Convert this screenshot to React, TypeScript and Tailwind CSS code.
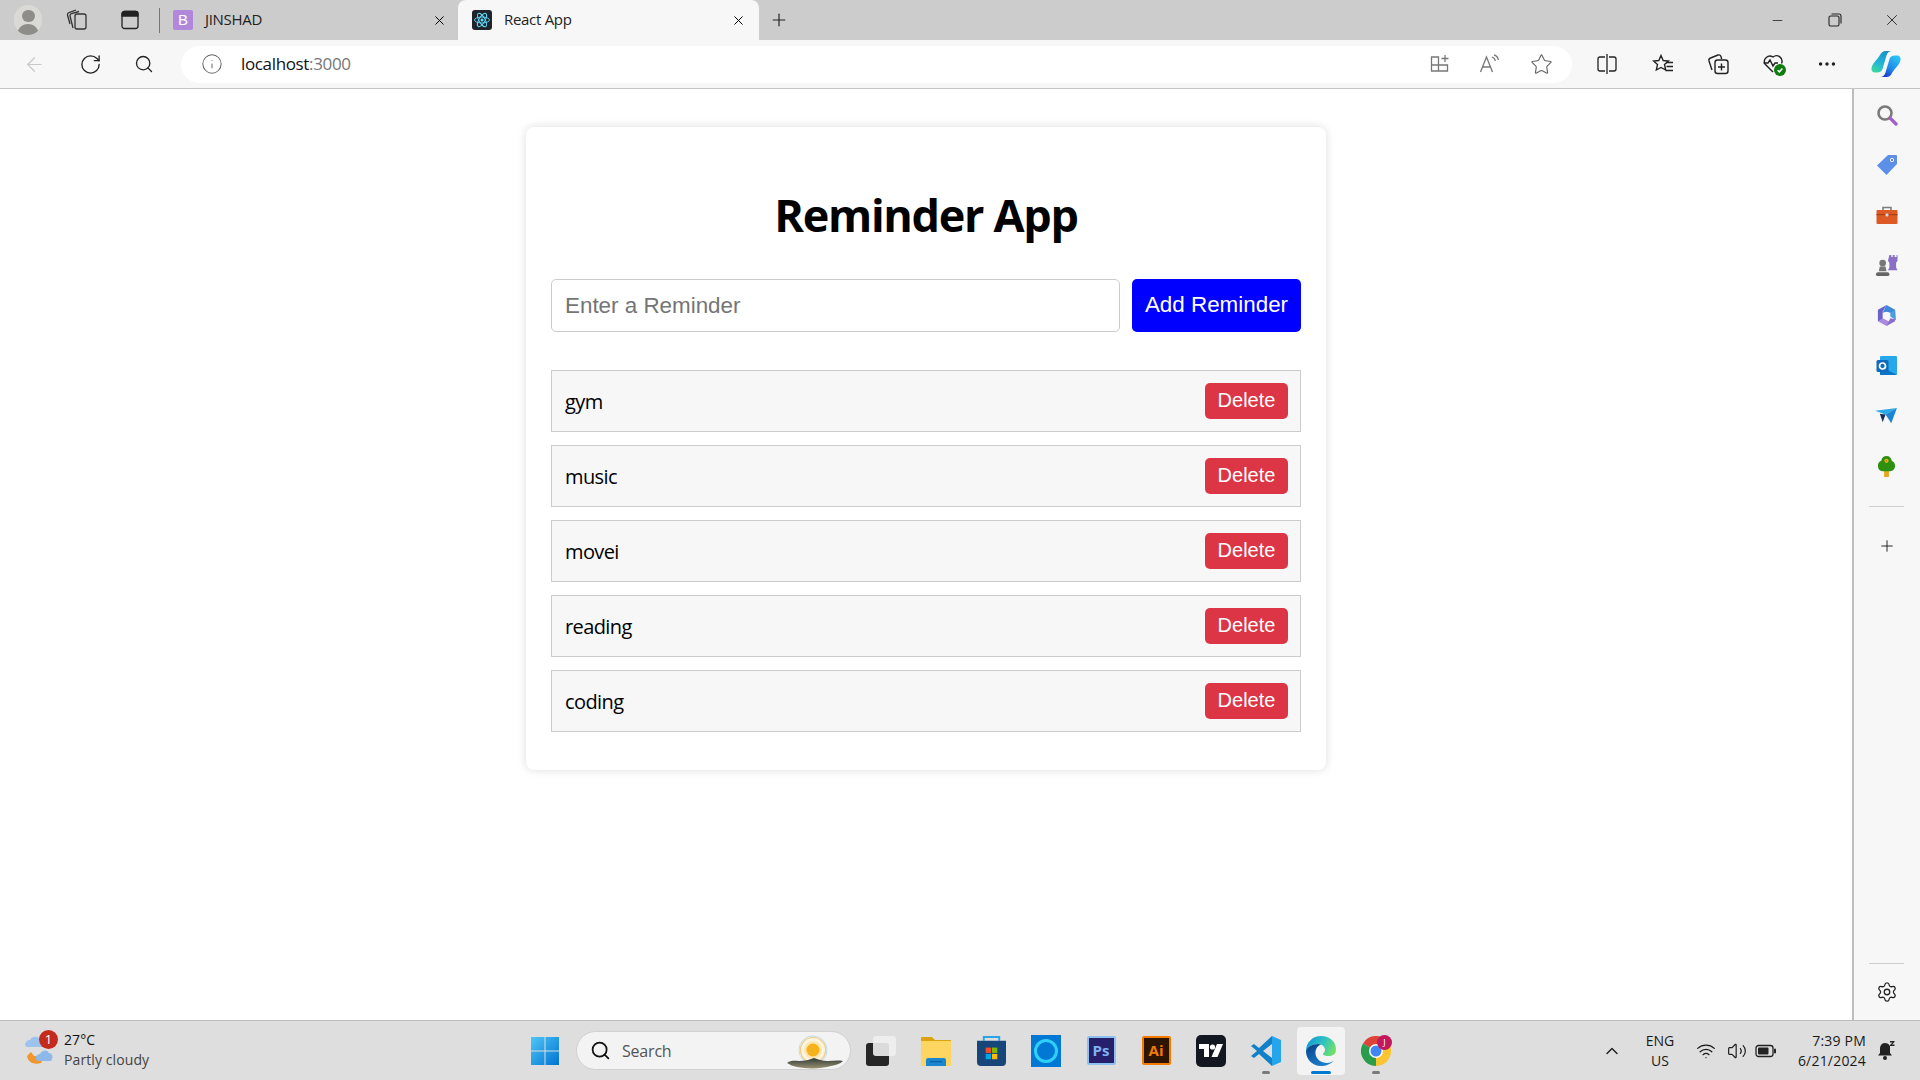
import { Plus, Search, X, RotateCw, ArrowLeft, Info, Star, MoreHorizontal, Settings, ChevronUp, Minus, Wifi, Volume2 } from "lucide-react";
import type { ReactNode } from "react";

const reminders = ["gym", "music", "movei", "reading", "coding"];

const ReactIcon = () => (
  <div className="w-5 h-5 bg-[#20232a] rounded-[3px] flex items-center justify-center">
    <svg viewBox="-12 -12 24 24" className="w-[18px] h-[18px]" fill="none" stroke="#61dafb" strokeWidth="1.2">
      <circle r="2" fill="#61dafb" stroke="none" />
      <ellipse rx="10" ry="4" />
      <ellipse rx="10" ry="4" transform="rotate(60)" />
      <ellipse rx="10" ry="4" transform="rotate(120)" />
    </svg>
  </div>
);

const Avatar = () => (
  <div className="w-7 h-[30px] rounded-full bg-[#d9d9d6] overflow-hidden flex flex-col items-center">
    <div className="w-[13px] h-[15px] rounded-full bg-[#8f8d89] mt-[5px]" />
    <div className="w-[22px] h-[14px] rounded-t-full bg-[#8f8d89] mt-[2px]" />
  </div>
);

const CollectionsTab = () => (
  <svg viewBox="0 0 22 24" className="w-[22px] h-6" fill="none" stroke="#333" strokeWidth="1.3">
    <rect x="9" y="6" width="11" height="15" rx="2" />
    <path d="M7 20 4 8a2 2 0 0 1 1.500-2.400L13 3.500" />
    <path d="M4 16 1.500 7a2 2 0 0 1 1.500-2.400L10 2" />
  </svg>
);

const TabPanel = () => (
  <svg viewBox="0 0 18 20" className="w-[18px] h-5" fill="none" stroke="#222" strokeWidth="1.3">
    <rect x="1" y="1.500" width="16" height="17" rx="2.500" />
    <path d="M1 4a2.500 2.500 0 0 1 2.500-2.500h11A2.500 2.500 0 0 1 17 4v2H1z" fill="#222" />
  </svg>
);

const AppAdd = () => (
  <svg viewBox="0 0 20 20" className="w-5 h-5" fill="none" stroke="#777" strokeWidth="1.3">
    <path d="M1.500 3h7v14h-7zM1.500 11h16v6h-9M8.500 11" />
    <path d="M15 1v7M11.500 4.500h7" />
  </svg>
);

const ReadAloud = () => (
  <svg viewBox="0 0 22 20" className="w-[22px] h-5" fill="none" stroke="#777" strokeWidth="1.3">
    <path d="M1.500 18 7.500 3l6 15M3.500 13h8" />
    <path d="M13 3c2 .6 3 2 3.300 4M15 1c2.500.6 4 2.500 4.400 5" />
  </svg>
);

const SplitScreen = () => (
  <svg viewBox="0 0 20 20" className="w-5 h-5" fill="none" stroke="#222" strokeWidth="1.3">
    <path d="M8 3H3a2 2 0 0 0-2 2v10a2 2 0 0 0 2 2h5M12 3h5a2 2 0 0 1 2 2v10a2 2 0 0 1-2 2h-5" />
    <path d="M10 0v20" />
  </svg>
);

const Favorites = () => (
  <svg viewBox="0 0 22 22" className="w-[22px] h-[22px]" fill="none" stroke="#222" strokeWidth="1.4">
    <path d="M9 2.500l2.200 5 5.300.5-4 3.600 1.200 5.400L9 14.500 4.300 17l1.200-5.400-4-3.600 5.300-.5z" />
    <path d="M14 9.500h7M14.500 13.500h6.500M13.500 17.500h7.500" />
  </svg>
);

const CollectionsBtn = () => (
  <svg viewBox="0 0 22 22" className="w-[22px] h-[22px]" fill="none" stroke="#222" strokeWidth="1.4">
    <rect x="8" y="7" width="13" height="13.500" rx="2.500" />
    <path d="M14.500 10.500v7M11 14h7" />
    <path d="M5 17 2 8a2.500 2.500 0 0 1 1.600-3L11 2a2.500 2.500 0 0 1 3 1.600l.7 2.400" />
  </svg>
);

const Health = () => (
  <div className="relative w-6 h-6">
    <svg viewBox="0 0 24 24" className="w-6 h-6" fill="none" stroke="#222" strokeWidth="1.4">
      <path d="M12 20 4 12a5.500 5.500 0 0 1 8-7 5.500 5.500 0 0 1 8.500 6.500" />
      <path d="M2.500 11H7l2-3 3 6 2-3h3" />
    </svg>
    <div className="absolute right-[-1px] bottom-0 w-3 h-3 rounded-full bg-[#107c10] flex items-center justify-center">
      <svg viewBox="0 0 10 10" className="w-2 h-2" fill="none" stroke="#fff" strokeWidth="1.8">
        <path d="M2 5.200 4.200 7.300 8 3" />
      </svg>
    </div>
  </div>
);

const Copilot = () => (
  <svg viewBox="0 0 30 28" className="w-[30px] h-[28px]">
    <defs>
      <linearGradient id="cpA" x1="0.7" y1="0" x2="0.2" y2="1">
        <stop offset="0" stopColor="#1a8fc8" />
        <stop offset="0.55" stopColor="#22b4d8" />
        <stop offset="1" stopColor="#3ad8a0" />
      </linearGradient>
      <linearGradient id="cpB" x1="0.9" y1="0.1" x2="0.3" y2="1">
        <stop offset="0" stopColor="#2cc4f4" />
        <stop offset="0.6" stopColor="#1c88e8" />
        <stop offset="1" stopColor="#1c3fd0" />
      </linearGradient>
    </defs>
    <path d="M9 5C10 3 12 1 14.500 1H21C18 1 16.200 3 15.500 5.500L11.500 19C11 21.200 9 22.500 6 22.500H4C1.500 22.500 0 20.500 .5 18 1.500 13 6 10 9 5Z" fill="url(#cpA)" />
    <path d="M21 23C20 25.500 18 27 15.500 27H9C12 27 13.800 25 14.500 22.500L18.500 9C19 6.800 21 5.500 24 5.500H26C28.500 5.500 30 7.500 29.500 10 28.500 15 24 18 21 23Z" fill="url(#cpB)" />
  </svg>
);

const SideIcons: ReactNode[] = [
  <svg key="s" viewBox="0 0 22 22" className="w-[22px] h-[22px]" fill="none">
    <circle cx="9" cy="9" r="6.500" stroke="#7a7a7a" strokeWidth="2.600" />
    <path d="M14 14l6 6" stroke="#a05fc9" strokeWidth="3.200" strokeLinecap="round" />
  </svg>,
  <svg key="t" viewBox="0 0 22 22" className="w-[22px] h-[22px]">
    <path d="M12 1h8a1 1 0 0 1 1 1v8L10.500 21 1 11.500z" fill="#5b8fe8" />
    <circle cx="16" cy="6" r="2" fill="#fff" />
    <circle cx="16" cy="6" r="1" fill="#3a5bb8" />
  </svg>,
  <svg key="b" viewBox="0 0 22 22" className="w-[22px] h-[22px]">
    <path d="M7 6V3.500h8V6" fill="none" stroke="#7d7d7d" strokeWidth="1.600" />
    <rect x="0.500" y="6" width="21" height="14" rx="1" fill="#dd5a24" />
    <rect x="0.500" y="10" width="21" height="1.200" fill="#a83f15" />
    <rect x="9.500" y="9.500" width="3" height="3" rx="1" fill="#d8d8d8" />
  </svg>,
  <svg key="c" viewBox="0 0 24 24" className="w-[23px] h-[23px]">
    <path d="M15 1h2v2h1.500V1h2v2H22.500V1h1v6l-1.500 2v5l1.500 3H13.500l1.500-3V9l-1.500-2z" fill="#8a70c4" />
    <circle cx="8" cy="9.500" r="3.500" fill="#777" />
    <path d="M5 13h6l1 5H4z" fill="#777" />
    <rect x="1" y="19" width="14" height="4" rx="2" fill="#666" />
  </svg>,
  <svg key="m" viewBox="0 0 22 24" className="w-[21px] h-[23px]">
    <path d="M11 1 20 6v5l-5-2-4-1-4 1z" fill="#3d8ad8" />
    <path d="M2 6 11 1 7 8 7 17 2 18z" fill="#6a62c9" />
    <path d="M20 6 21 17 15 13 15 9z" fill="#4f9be0" />
    <path d="M2 18 7 15 15 19 11 23z" fill="#a98ae0" />
    <path d="M20 18 11 23 15 15 20 16z" fill="#8a6ed0" />
    <circle cx="11" cy="12" r="3.500" fill="#f7f7f7" />
  </svg>,
  <svg key="o" viewBox="0 0 22 22" className="w-[22px] h-[22px]">
    <rect x="4" y="1" width="17" height="19" rx="1" fill="#28a8ea" />
    <path d="M4 11l17 9H4z" fill="#0a6fc2" opacity=".9" />
    <rect x="0.500" y="5" width="12" height="12" rx="1.500" fill="#0f6cbd" />
    <circle cx="6.500" cy="11" r="3" fill="none" stroke="#fff" strokeWidth="1.700" />
  </svg>,
  <svg key="p" viewBox="0 0 24 20" className="w-[23px] h-[19px]">
    <path d="M0 4 23 1 11 8z" fill="#29a9e8" />
    <path d="M23 1 17 17 11 8z" fill="#1b84d4" />
    <path d="M5 7 11 8 8 16z" fill="#1d2e52" />
  </svg>,
  <svg key="g" viewBox="0 0 20 24" className="w-[19px] h-[23px]">
    <rect x="7.500" y="16" width="5" height="7" fill="#e6a817" />
    <path d="M10 1c3 0 5 2 5.500 5 2.500 1 3.500 3 3.500 5.500S17 17 14 17H6c-3 0-5-2.500-5-5.500S2 7 4.500 6C5 3 7 1 10 1z" fill="#2f8f0f" />
    <circle cx="10" cy="6" r="2.200" fill="#f2b21c" />
    <circle cx="10" cy="6" r=".9" fill="#c77f0a" />
  </svg>,
];

const SideSlot = ({ children }: { children: ReactNode }) => (
  <div className="h-[50.2px] flex items-center justify-center">{children}</div>
);

const TaskIcon = ({ children, active, dot }: { children: ReactNode; active?: boolean; dot?: boolean }) => (
  <div className={active ? "relative w-[48px] h-[48px] mx-[3.500px] rounded-[4px] bg-[#f3f3f3] flex items-center justify-center" : "relative w-[30px] h-[48px] mx-[12.500px] flex items-center justify-center"}>
    {children}
    {active && <div className="absolute bottom-[1px] left-[14px] w-5 h-[3px] rounded-full bg-[#0078d4]" />}
    {dot && <div className="absolute bottom-[1px] left-[11px] w-2 h-[3px] rounded-full bg-[#7a7a7a]" />}
  </div>
);

const WinLogo = () => (
  <svg viewBox="0 0 30 30" className="w-[30px] h-[30px]">
    <defs>
      <linearGradient id="win" x1="0" y1="0" x2="1" y2="1">
        <stop offset="0" stopColor="#4fc6f8" />
        <stop offset="1" stopColor="#0073d1" />
      </linearGradient>
    </defs>
    <path d="M1 1h13.500v13.500H1zM15.500 1H29v13.500H15.500zM1 15.500h13.500V29H1zM15.500 15.500H29V29H15.500z" fill="url(#win)" />
  </svg>
);

const TaskView = () => (
  <div className="relative w-[30px] h-[30px]">
    <div className="absolute left-0 bottom-0 w-[23px] h-[23px] rounded-[3px] bg-[#262626]" />
    <div className="absolute right-0 top-0 w-[23px] h-[20px] rounded-[3px] bg-[#f0f0f0]/90" />
  </div>
);

const Explorer = () => (
  <svg viewBox="0 0 30 30" className="w-[30px] h-[30px]">
    <path d="M0 2a1 1 0 0 1 1-1h10l3 3h16v6H0z" fill="#dca20f" />
    <rect x="0" y="5" width="30" height="25" fill="#fcd661" />
    <path d="M5 30v-6a2 2 0 0 1 2-2h16a2 2 0 0 1 2 2v6z" fill="#1a86d0" />
    <rect x="9" y="25" width="12" height="1.200" fill="#0c5fa0" />
  </svg>
);

const Store = () => (
  <svg viewBox="0 0 30 32" className="w-[29px] h-[31px]">
    <path d="M7 6V2h16v4" fill="none" stroke="#2aa4e8" strokeWidth="2" />
    <path d="M0 6h30v22a4 4 0 0 1-4 4H4a4 4 0 0 1-4-4z" fill="#17467a" />
    <rect x="9" y="13" width="5.500" height="5.500" fill="#f25022" />
    <rect x="15.500" y="13" width="5.500" height="5.500" fill="#7fba00" />
    <rect x="9" y="19.500" width="5.500" height="5.500" fill="#00a4ef" />
    <rect x="15.500" y="19.500" width="5.500" height="5.500" fill="#ffb900" />
  </svg>
);

const Alexa = () => (
  <div className="w-[30px] h-[32px] bg-[#0078d4] flex items-center justify-center">
    <div className="w-[24px] h-[24px] rounded-full border-[3px] border-[#2fd0f5]" />
  </div>
);

const PsIcon = () => (
  <div className="w-[29px] h-[29px] bg-[#261f6b] border-2 border-[#8fc0f0] rounded-[2px] flex items-center justify-center text-[15px] font-bold font-['Open_Sans',sans-serif] text-[#7fb2f0]">
    Ps
  </div>
);

const AiIcon = () => (
  <div className="w-[29px] h-[29px] bg-[#2d1500] border-2 border-[#f47b00] rounded-[2px] flex items-center justify-center text-[15px] font-bold font-['Open_Sans',sans-serif] text-[#f47b00]">
    Ai
  </div>
);

const TradingView = () => (
  <div className="w-[30px] h-[32px] bg-[#131722] rounded-[5px] flex items-center justify-center">
    <svg viewBox="0 0 24 14" className="w-[24px] h-[14px]" fill="#fff">
      <path d="M0 0h10v13H5V5H0z" />
      <circle cx="13.500" cy="3" r="2.600" />
      <path d="M18 0h6l-5.500 13h-6z" />
    </svg>
  </div>
);

const VsCode = () => (
  <svg viewBox="0 0 30 32" className="w-[30px] h-[32px]">
    <path d="M21 1 8 13 3 9 0 11l6 5-6 5 3 2 5-4 13 12v-8l-9-7 9-7z" fill="#1280c8" />
    <path d="M21 1 30 5v22l-9 4z" fill="#25a5ec" />
  </svg>
);

const Edge = () => (
  <svg viewBox="0 0 30 30" className="w-[30px] h-[30px]">
    <defs>
      <linearGradient id="edgeA" x1="0" y1="0.2" x2="1" y2="0.6">
        <stop offset="0" stopColor="#1296d8" />
        <stop offset="0.55" stopColor="#30c4c0" />
        <stop offset="1" stopColor="#72e066" />
      </linearGradient>
      <linearGradient id="edgeB" x1="0.2" y1="0.1" x2="0.8" y2="1">
        <stop offset="0" stopColor="#0c4a90" />
        <stop offset="1" stopColor="#1a86d8" />
      </linearGradient>
    </defs>
    <path d="M0 15C0 6 7 0 15 0 24 0 30 6 30 13 30 18 27 20 23 20 20 20 17 19.500 17 18 17 17 19 16.500 19 14 19 10 15 8 12 8 6 8 1 11 0 15Z" fill="url(#edgeA)" />
    <path d="M0 15C1 11 6 8 12 8 13 8 14 8.200 15 8.500 11 10 9 14 9.500 18 10 23 15 27 21 27 24 27 26 26 28 24.500 25 28 20 30 15 30 6 30 0 23 0 15Z" fill="url(#edgeB)" />
  </svg>
);

const Chrome = () => (
  <div className="relative w-[30px] h-[32px]">
    <svg viewBox="0 0 30 30" className="w-[30px] h-[30px] mt-[1px]">
      <path d="M15 15 2 7.500A15 15 0 0 1 28 7.500Z" fill="#db4437" />
      <path d="M15 15 28 7.500A15 15 0 0 1 15 30Z" fill="#fbc531" />
      <path d="M15 15V30A15 15 0 0 1 2 7.500Z" fill="#2a9d4c" />
      <circle cx="15" cy="15" r="7" fill="#fff" />
      <circle cx="15" cy="15" r="5.500" fill="#4285f4" />
    </svg>
    <div className="absolute right-[-1px] top-0 w-[15px] h-[15px] rounded-full bg-[#c2185b] text-white text-[9px] leading-[15px] text-center">J</div>
  </div>
);

const Weather = () => (
  <div className="relative w-[32px] h-[40px]">
    <svg viewBox="0 0 32 38" className="w-[32px] h-[38px]">
      <path d="M1 14a5 5 0 0 1 5-5 6 6 0 0 1 11 1 3 3 0 0 1 1 6H4a3 3 0 0 1-3-2z" fill="#9cc2ee" />
      <path d="M3 25c1 7 8 9 14 7l3-6-10-1-3-4z" fill="#f0962c" />
      <path d="M12 28a4 4 0 0 1 4-5 5 5 0 0 1 9-1 4 4 0 0 1 3 6 2 2 0 0 1-2 2H14a3 3 0 0 1-2-2z" fill="#8db8ea" />
    </svg>
    <div className="absolute left-[15px] top-[-1px] w-[19px] h-[19px] rounded-full bg-[#c42b1c] text-white text-[13px] leading-[19px] text-center">1</div>
  </div>
);

const SunBadge = () => (
  <svg viewBox="0 0 56 38" className="ml-auto mr-[7px] w-[56px] h-[38px]">
    <defs>
      <linearGradient id="hill" x1="0" y1="0" x2="0" y2="1">
        <stop offset="0" stopColor="#2e3a38" />
        <stop offset="1" stopColor="#9a8f70" />
      </linearGradient>
    </defs>
    <circle cx="26" cy="18" r="14" fill="#fdf5e2" stroke="#bcdcea" strokeWidth="1" />
    <circle cx="26" cy="18" r="12.500" fill="none" stroke="#f4c98a" strokeWidth="1.200" />
    <circle cx="26" cy="18" r="9" fill="#fbdc8c" opacity=".6" />
    <circle cx="26" cy="18" r="6.500" fill="#f6b21c" />
    <path d="M0 31c4-3 8-2 12-2 6 0 10-1 15-3 4 1 8 3 14 3 5 0 9-1 15 0-3 3-7 4-12 5-10 3-24 3-34 1-4-1-7-2-10-4z" fill="url(#hill)" />
  </svg>
);

const Battery = () => (
  <svg viewBox="0 0 22 14" className="w-[22px] h-[14px]" fill="none" stroke="#222" strokeWidth="1.300">
    <rect x="1" y="1.500" width="17" height="11" rx="2.500" />
    <rect x="3" y="3.500" width="10.500" height="7" rx="1" fill="#222" stroke="none" />
    <path d="M20 5.500v3" strokeWidth="2" strokeLinecap="round" />
  </svg>
);

const BellSleep = () => (
  <svg viewBox="0 0 18 20" className="w-[18px] h-5" fill="#222">
    <path d="M8 2c-3.500 0-5 3-5 6v4l-2 2.500h14L13 12V5C12 3 10 2 8 2z" />
    <circle cx="8" cy="17" r="2" />
    <path d="M13 0h4.500v1L15 3.500h2.500V5H13V4l2.500-2.500H13z" />
  </svg>
);

const App = () => {
  return (
    <div className="w-[1920px] h-[1080px] flex flex-col overflow-hidden bg-white text-black font-['Open_Sans',sans-serif]">
      {/* tab strip */}
      <div className="h-10 bg-[#cccccc] flex items-end shrink-0">
        <div className="w-[14px]" />
        <div className="h-10 flex items-center"><Avatar /></div>
        <div className="h-10 w-[72px] flex items-center justify-center ml-[-1px]"><CollectionsTab /></div>
        <div className="h-10 w-[18px] flex items-center justify-center ml-[8px]"><TabPanel /></div>
        <div className="w-px h-[25px] bg-[#777] ml-[20px] mb-[7px]" />
        <div className="w-[298px] h-10 flex items-center pl-[13px]">
          <div className="w-5 h-5 rounded-[2px] bg-[#b187dc] text-white text-[15px] leading-5 text-center font-['Liberation_Sans',sans-serif]">B</div>
          <span className="ml-3 mb-[2px] text-[15px] tracking-[-0.3px] text-[#222]">JINSHAD</span>
          <X className="ml-auto mr-[11px] w-[15px] h-[15px] text-black" strokeWidth={1.6} />
        </div>
        <div className="w-[301px] h-10 bg-[#f7f7f7] rounded-t-[8px] flex items-center pl-[14px]">
          <ReactIcon />
          <span className="ml-3 mb-[2px] text-[15px] tracking-[-0.3px] text-[#222]">React App</span>
          <X className="ml-auto mr-[13px] w-[15px] h-[15px] text-black" strokeWidth={1.6} />
        </div>
        <div className="w-10 h-10 flex items-center justify-center">
          <Plus className="w-[20px] h-[20px] text-[#222]" strokeWidth={1.4} />
        </div>
        <div className="ml-auto h-10 flex items-center text-[#222]">
          <div className="w-[57px] flex justify-center"><Minus className="w-[15px] h-[15px]" strokeWidth={1.3} /></div>
          <div className="w-[57px] flex justify-center">
            <svg viewBox="0 0 14 14" className="w-[14px] h-[14px]" fill="none" stroke="#222" strokeWidth="1.100">
              <rect x="1" y="3" width="10" height="10" rx="1.500" />
              <path d="M3.500 1H11a2 2 0 0 1 2 2v7.500" />
            </svg>
          </div>
          <div className="w-[57px] flex justify-center"><X className="w-[18px] h-[18px]" strokeWidth={1.2} /></div>
        </div>
      </div>

      {/* address bar row */}
      <div className="h-[49px] bg-[#f7f7f7] border-b border-[#c4c4c4] flex items-center shrink-0">
        <div className="w-[181px] flex items-center">
          <ArrowLeft className="ml-[23px] w-[23px] h-[23px] text-[#c9c9c9]" strokeWidth={1.3} />
          <RotateCw className="ml-[33px] w-[23px] h-[23px] text-[#222]" strokeWidth={1.4} />
          <Search className="ml-[32px] w-[20px] h-[20px] text-[#222]" strokeWidth={1.6} />
        </div>
        <div className="w-[1391px] h-[37px] bg-white rounded-full flex items-center">
          <Info className="ml-[20px] w-[22px] h-[22px] text-[#666]" strokeWidth={1.1} />
          <span className="ml-[18px] text-[17px] tracking-[-0.35px] text-[#111]">localhost<span className="text-[#777]">:3000</span></span>
          <div className="ml-auto flex items-center mr-[19px] gap-[29px]">
            <AppAdd />
            <ReadAloud />
            <Star className="w-[23px] h-[23px] text-[#666]" strokeWidth={1.2} />
          </div>
        </div>
        <div className="flex items-center ml-[25px]">
          <SplitScreen />
          <div className="ml-[35px]"><Favorites /></div>
          <div className="ml-[33px]"><CollectionsBtn /></div>
          <div className="ml-[32px]"><Health /></div>
          <MoreHorizontal className="w-[22px] h-[22px] text-[#222] ml-[31px]" strokeWidth={1.8} />
          <div className="ml-[33px]"><Copilot /></div>
        </div>
      </div>

      {/* page + sidebar */}
      <div className="flex-1 flex min-h-0">
        <main className="flex-1 bg-white">
          <div className="w-[800px] mx-auto mt-[38px] pt-[25px] px-[25px] pb-[25px] rounded-[8px] bg-white shadow-[0_0_10px_rgba(0,0,0,0.14)]">
            <h1 className="mt-[36px] mb-[37px] h-[54px] text-[45px] leading-[54px] font-bold text-center tracking-[-1.3px]">Reminder App</h1>
            <div className="flex gap-[12px] mb-[38px] font-['Liberation_Sans',sans-serif]">
              <input
                placeholder="Enter a Reminder"
                className="flex-1 h-[53px] px-[13px] text-[22.400px] border border-[#cccccc] rounded-[5px] bg-white placeholder:text-[#757575]"
              />
              <button className="w-[169px] h-[53px] pb-[1px] bg-[#0000ff] text-white text-[22.400px] rounded-[5px]">Add Reminder</button>
            </div>
            <ul>
              {reminders.map((r) => (
                <li key={r} className="h-[62px] mb-[13px] pl-[13px] pr-[12px] flex items-center justify-between border border-[#cccccc] bg-[#f7f7f7] text-[20px]">
                  <span className="mt-[2px] tracking-[-0.6px]">{r}</span>
                  <button className="w-[83px] h-[36px] pb-[2px] bg-[#dc3545] text-white text-[20px] rounded-[5px] font-['Liberation_Sans',sans-serif]">Delete</button>
                </li>
              ))}
            </ul>
          </div>
        </main>
        <aside className="w-[68px] bg-[#f7f7f7] border-l-2 border-[#bdbdbd] flex flex-col items-center pt-[1px] pr-[1px]">
          {SideIcons.map((icon, i) => (
            <SideSlot key={i}>{icon}</SideSlot>
          ))}
          <div className="w-[35px] h-px bg-[#cfcfcf] mt-[14px]" />
          <div className="h-[79px] flex items-center justify-center"><Plus className="w-[18px] h-[18px] text-[#222]" strokeWidth={1.3} /></div>
          <div className="mt-auto w-[35px] h-px bg-[#cfcfcf]" />
          <div className="h-[56px] flex items-center justify-center"><Settings className="w-[22px] h-[22px] text-[#222]" strokeWidth={1.4} /></div>
        </aside>
      </div>

      {/* taskbar */}
      <div className="h-[60px] bg-[#dedede] border-t border-[#bcbcbc] flex items-center shrink-0 relative">
        <div className="w-[530px] flex items-center pl-[24px]">
          <Weather />
          <div className="ml-[8px] mt-[-2px] text-[14px] leading-[20px] tracking-[0.1px]">
            <div className="text-[#111]">27°C</div>
            <div className="text-[#444]">Partly cloudy</div>
          </div>
        </div>
        <WinLogo />
        <div className="ml-[16px] w-[275px] h-[39px] rounded-full bg-[#f3f3f3] border border-[#d0d0d0] flex items-center pl-[13px]">
          <Search className="w-[21px] h-[21px] text-[#111]" strokeWidth={2} />
          <span className="ml-[11px] text-[16px] tracking-[-0.2px] text-[#555]">Search</span>
          <SunBadge />
        </div>
        <div className="ml-[2.500px] flex items-center">
          <TaskIcon><TaskView /></TaskIcon>
          <TaskIcon><Explorer /></TaskIcon>
          <TaskIcon><Store /></TaskIcon>
          <TaskIcon><Alexa /></TaskIcon>
          <TaskIcon><PsIcon /></TaskIcon>
          <TaskIcon><AiIcon /></TaskIcon>
          <TaskIcon><TradingView /></TaskIcon>
          <TaskIcon dot><VsCode /></TaskIcon>
          <TaskIcon active><Edge /></TaskIcon>
          <TaskIcon dot><Chrome /></TaskIcon>
        </div>
        <div className="ml-auto flex items-center pr-[25px] text-[#1a1a1a]">
          <ChevronUp className="w-[20px] h-[20px]" strokeWidth={1.6} />
          <div className="ml-[16px] w-[44px] text-center text-[14px] leading-[20px]">
            <div>ENG</div>
            <div>US</div>
          </div>
          <Wifi className="ml-[14px] w-[20px] h-[20px]" strokeWidth={1.5} />
          <Volume2 className="ml-[11px] w-[20px] h-[20px]" strokeWidth={1.4} />
          <div className="ml-[8px]"><Battery /></div>
          <div className="ml-[21px] text-right text-[14px] leading-[20px] tracking-[0.2px]">
            <div>7:39 PM</div>
            <div>6/21/2024</div>
          </div>
          <div className="ml-[11px]"><BellSleep /></div>
        </div>
      </div>
    </div>
  );
};

export default App;
